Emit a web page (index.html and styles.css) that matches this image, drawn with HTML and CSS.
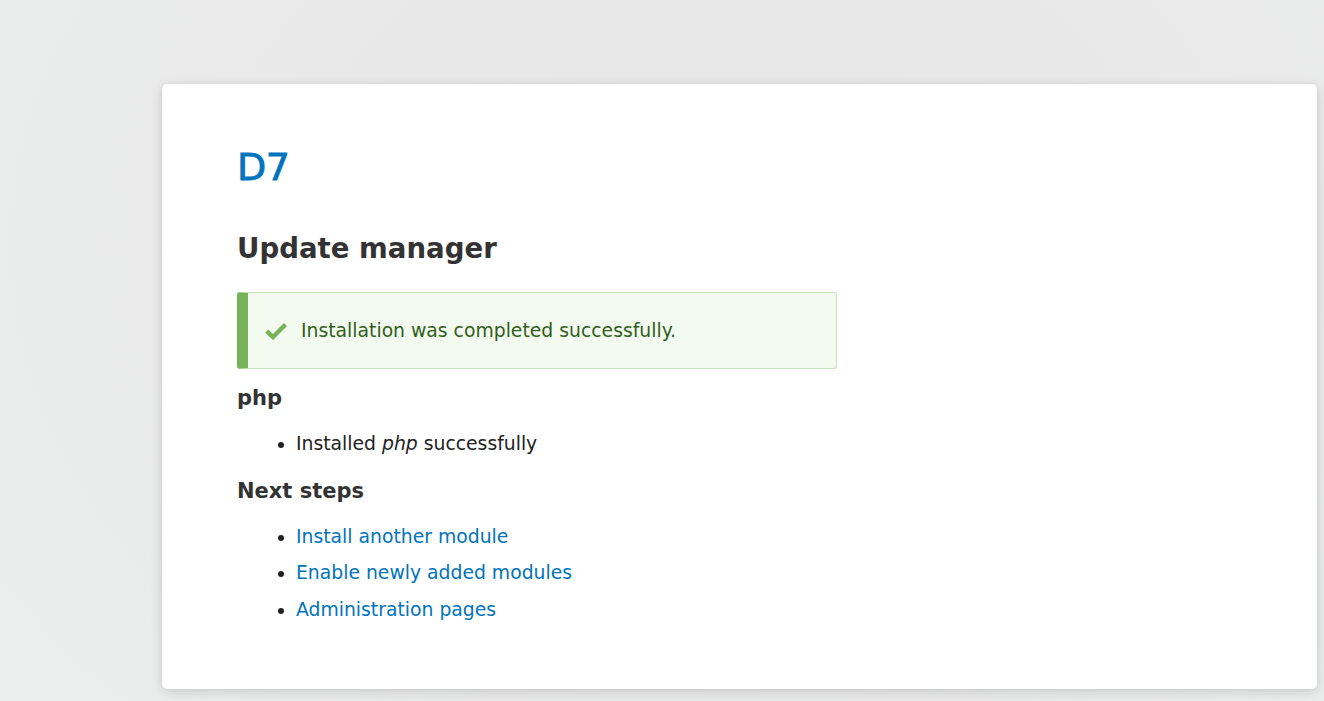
FILE: index.html
```html
<!DOCTYPE html>
<html lang="en">
<head>
<meta charset="utf-8">
<title>Update manager | D7</title>
<link rel="stylesheet" href="styles.css">
</head>
<body class="page">
  <main class="card">
    <div class="site-name"><a href="#">D7</a></div>
    <h1 class="page-title">Update manager</h1>
    <div class="messages messages--status" role="status">
      <svg class="messages__icon" width="22" height="18" viewBox="0 0 22 18" aria-hidden="true">
        <polyline points="1.8,9.2 8,15 20.5,2.5" fill="none" stroke="#77b259" stroke-width="4.4" stroke-linejoin="miter"/>
      </svg>
      <span class="messages__text">Installation was completed successfully.</span>
    </div>
    <h2 class="section-title">php</h2>
    <ul class="item-list">
      <li>Installed <em>php</em> successfully</li>
    </ul>
    <h2 class="section-title">Next steps</h2>
    <ul class="item-list">
      <li><a href="#">Install another module</a></li>
      <li><a href="#">Enable newly added modules</a></li>
      <li><a href="#">Administration pages</a></li>
    </ul>
  </main>
</body>
</html>
```

FILE: styles.css
```css
html, body {
  margin: 0;
  padding: 0;
}

.page {
  min-height: 701px;
  box-sizing: border-box;
  padding: 84px 7px 12px 162px;
  font-family: "DejaVu Sans", "Liberation Sans", sans-serif;
  color: #222;
  background-color: #eaebea;
  background-image: radial-gradient(ellipse 900px 700px at 55% 35%, #e6e6e6 0%, #e8e9e8 55%, #eceded 100%);
}

.card {
  box-sizing: border-box;
  min-height: 605px;
  padding: 61px 40px 40px 75px;
  background: #fff;
  border-radius: 5px;
  box-shadow: 0 3px 12px rgba(0, 0, 0, 0.13), 0 0 4px rgba(0, 0, 0, 0.05);
}

.site-name {
  font-size: 38px;
  line-height: 44px;
  font-weight: normal;
  letter-spacing: -0.5px;
}

.site-name a {
  color: #0074bd;
  text-decoration: none;
  -webkit-text-stroke: 0.8px #0074bd;
}

.page-title {
  margin: 43px 0 0;
  font-size: 27.6px;
  line-height: 34px;
  font-weight: bold;
  color: #333;
}

.messages {
  box-sizing: border-box;
  width: 600px;
  margin-top: 26px;
  display: flex;
  align-items: center;
  gap: 14px;
  padding: 24px 20px 24px 17px;
  background: #f3faef;
  color: #325e1c;
  border: 1px solid #c9e1bd;
  border-left: 11px solid #77b259;
  border-radius: 3px;
  font-size: 18.8px;
  line-height: 27px;
}

.messages__icon {
  flex: none;
  display: block;
}

.section-title {
  margin: 16px 0 0;
  font-size: 21px;
  line-height: 26px;
  font-weight: bold;
  color: #333;
}

.item-list {
  margin: 19px 0 0;
  padding: 0 0 0 59px;
  font-size: 18.8px;
  line-height: 28px;
  color: #222;
}

.item-list li + li {
  margin-top: 8.35px;
}

.item-list + .section-title {
  margin-top: 20px;
}

.item-list a {
  color: #0074bd;
  text-decoration: none;
}
```
